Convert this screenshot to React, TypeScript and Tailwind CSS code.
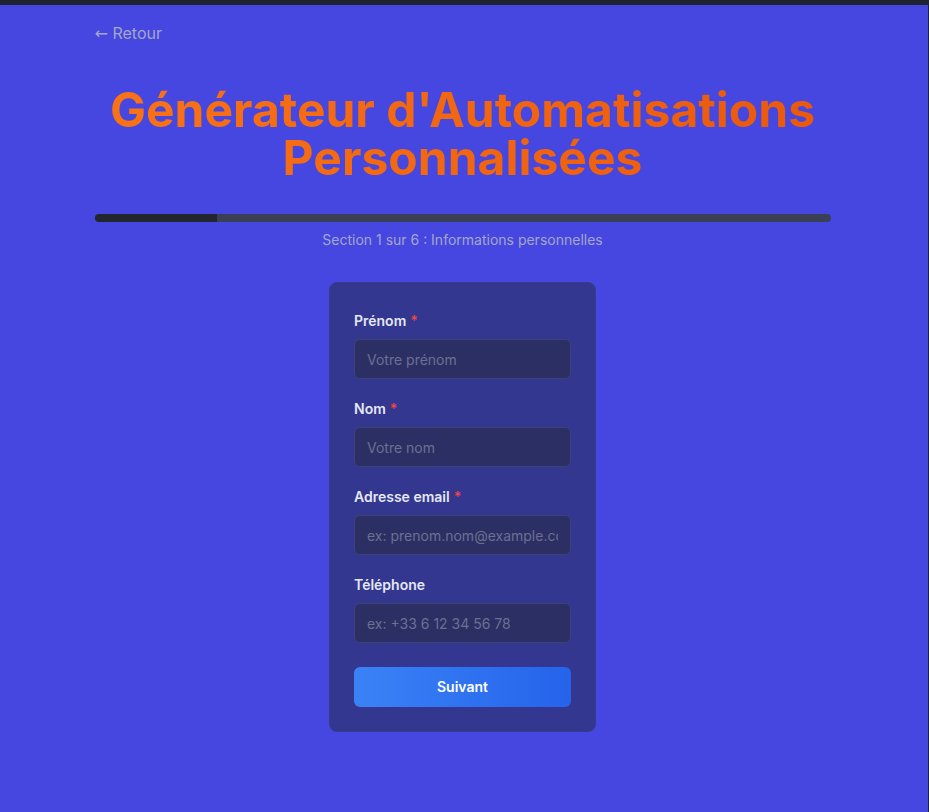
import React, { useState } from "react";

interface Field {
  id: string;
  label: string;
  placeholder: string;
  type: string;
  required: boolean;
}

const fields: Field[] = [
  { id: "prenom", label: "Prénom", placeholder: "Votre prénom", type: "text", required: true },
  { id: "nom", label: "Nom", placeholder: "Votre nom", type: "text", required: true },
  { id: "email", label: "Adresse email", placeholder: "ex: prenom.nom@example.com", type: "email", required: true },
  { id: "telephone", label: "Téléphone", placeholder: "ex: +33 6 12 34 56 78", type: "tel", required: false },
];

const App: React.FC = () => {
  const [values, setValues] = useState<Record<string, string>>({});
  const section = 1;
  const total = 6;

  return (
    <div
      className="min-h-screen bg-[#4646e0] border-r border-[#1f2231]"
      style={{ fontFamily: "Inter, 'Noto Sans', sans-serif" }}
    >
      <div className="h-[5px] bg-[#1f2231]" />
      <div className="pr-[3px]">
        <div className="mx-auto max-w-3xl px-4 pt-4 pb-20">
          <a href="#" className="inline-block text-base text-[#a3a6c9]">
            <span style={{ fontFamily: "'DejaVu Sans', sans-serif" }}>←</span> Retour
          </a>

          <h1 className="mt-10 text-center text-5xl leading-none font-bold bg-gradient-to-r from-[#f97316] to-[#ea580c] bg-clip-text text-transparent">
            Générateur d'Automatisations
            <br />
            Personnalisées
          </h1>

          <div className="mt-8 h-2 w-full rounded-full bg-[#3a4156] overflow-hidden">
            <div className="h-full bg-[#23252f]" style={{ width: `${(section / total) * 100}%` }} />
          </div>
          <p className="mt-2 text-center text-sm text-[#a3a6c9]">
            Section {section} sur {total} : Informations personnelles
          </p>

          <form
            className="mx-auto mt-8 w-[267px] rounded-lg border border-[#383c88] bg-[#33378f] px-6 pt-7 pb-6"
            onSubmit={(e) => e.preventDefault()}
          >
            <div className="flex flex-col gap-5">
              {fields.map((f) => (
                <div key={f.id}>
                  <label htmlFor={f.id} className="mb-2 block text-sm font-semibold text-[#e5e7f5]">
                    {f.label}
                    {f.required && <span className="ml-1 text-[#ef4444]">*</span>}
                  </label>
                  <input
                    id={f.id}
                    type={f.type}
                    placeholder={f.placeholder}
                    value={values[f.id] ?? ""}
                    onChange={(e) => setValues({ ...values, [f.id]: e.target.value })}
                    className="block h-10 w-full rounded-md border border-[#3d4274] bg-[#2b2f63] px-3 text-sm text-white placeholder:text-[#6b7092] outline-none"
                  />
                </div>
              ))}
            </div>
            <button
              type="submit"
              className="mt-6 h-10 w-full rounded-md bg-gradient-to-r from-[#3b82f6] to-[#2563eb] text-sm font-semibold text-white"
            >
              Suivant
            </button>
          </form>
        </div>
      </div>
    </div>
  );
};

export default App;
